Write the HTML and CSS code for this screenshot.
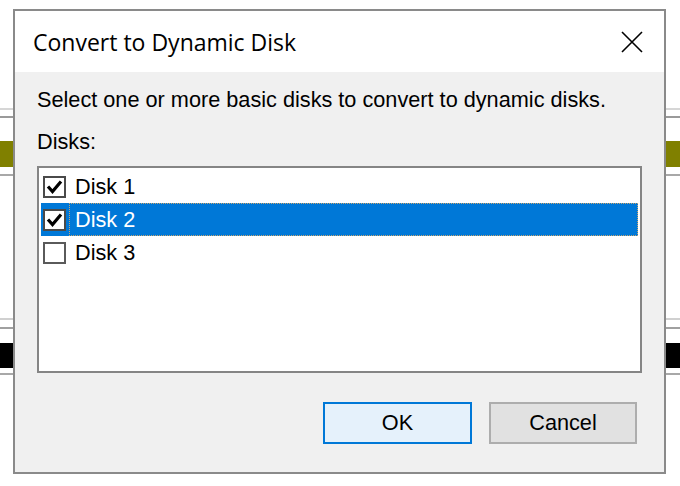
FILE: index.html
```html
<!DOCTYPE html>
<html>
<head>
<meta charset="utf-8">
<link rel="stylesheet" href="styles.css">
</head>
<body>
<div class="desk">
  <div class="stripe s1"></div>
  <div class="stripe s2"></div>
  <div class="stripe s3"></div>
  <div class="stripe s4"></div>
  <div class="stripe s5"></div>
  <div class="stripe s6"></div>
  <div class="stripe s7"></div>
  <div class="stripe s8"></div>
</div>
<div class="dialog">
  <div class="titlebar">
    <span class="title">Convert to Dynamic Disk</span>
    <svg class="close" width="22" height="22" viewBox="0 0 22 22"><path d="M1 1 L21 21 M21 1 L1 21" stroke="#000" stroke-width="1.6" fill="none"/></svg>
  </div>
  <div class="content">
    <div class="line instr">Select one or more basic disks to convert to dynamic disks.</div>
    <div class="line label">Disks:</div>
    <div class="listbox">
      <div class="row">
        <svg class="cb" width="23" height="22" viewBox="0 0 23 22"><rect x="1" y="1" width="21" height="20" fill="#fff" stroke="#4a4a4a" stroke-width="2"/><path d="M5 10.5 L9.5 15.5 L18 5.5" stroke="#000" stroke-width="3.2" fill="none"/></svg>
        <span class="txt">Disk 1</span>
      </div>
      <div class="row sel">
        <svg class="cb" width="23" height="22" viewBox="0 0 23 22"><rect x="1" y="1" width="21" height="20" fill="#fff" stroke="#4a4a4a" stroke-width="2"/><path d="M5 10.5 L9.5 15.5 L18 5.5" stroke="#000" stroke-width="3.2" fill="none"/></svg>
        <span class="txt">Disk 2</span>
      </div>
      <div class="row">
        <svg class="cb" width="23" height="22" viewBox="0 0 23 22"><rect x="1" y="1" width="21" height="20" fill="#fff" stroke="#5a5a5a" stroke-width="2"/></svg>
        <span class="txt">Disk 3</span>
      </div>
    </div>
    <div class="buttons">
      <div class="btn ok">OK</div>
      <div class="btn">Cancel</div>
    </div>
  </div>
</div>
</body>
</html>
```

FILE: styles.css
```css
html, body {
  margin: 0;
  padding: 0;
  width: 680px;
  height: 486px;
  overflow: hidden;
  background: #fff;
}
.desk {
  display: flex;
  flex-direction: column;
}
.stripe { width: 100%; }
.s1 { margin-top: 108px; height: 2px; background: #d6d6d6; }
.s2 { margin-top: 6px; height: 2px; background: #9a9a9a; }
.s3 { margin-top: 23px; height: 26px; background: #808000; }
.s4 { margin-top: 7px; height: 2px; background: #a8a8a8; }
.s5 { margin-top: 142px; height: 2px; background: #d0d0d0; }
.s6 { margin-top: 7px; height: 2px; background: #a0a0a0; }
.s7 { margin-top: 14px; height: 25px; background: #000; }
.s8 { margin-top: 5px; height: 2px; background: #a8a8a8; }

.dialog {
  position: absolute;
  left: 13px;
  top: 9px;
  width: 649px;
  height: 461px;
  border: 2px solid #8a8a8a;
  background: #f0f0f0;
  display: flex;
  flex-direction: column;
  font-family: "Liberation Sans", Arial, sans-serif;
  color: #000;
}
.titlebar {
  height: 61px;
  background: #fff;
  display: flex;
  align-items: center;
  justify-content: space-between;
  padding: 0 21px 0 18px;
}
.title {
  font-family: "Open Sans", "Noto Sans", sans-serif;
  font-size: 23px;
  color: #000;
}
.close { display: block; }
.content {
  padding: 16px 22px 0 22px;
  display: flex;
  flex-direction: column;
  flex: 1;
}
.line {
  font-size: 21.7px;
  line-height: 24px;
  white-space: nowrap;
}
.label { margin-top: 18px; }
.listbox {
  margin-top: 12px;
  width: 597px;
  height: 199px;
  border: 2px solid #858585;
  background: #fff;
  padding: 2px;
  box-sizing: content-box;
  display: flex;
  flex-direction: column;
}
.row {
  height: 33px;
  display: flex;
  align-items: center;
  padding-left: 2px;
}
.cb { display: block; flex: none; }
.txt {
  font-size: 21.7px;
  margin-left: 3px;
  padding-left: 5px;
  height: 31px;
  line-height: 31px;
  flex: 1;
  border: 1px dotted transparent;
}
.sel { background: #0078d7; }
.sel .txt {
  color: #fff;
  border: 1px dotted #c9a56e;
}
.buttons {
  display: flex;
  justify-content: flex-end;
  gap: 17px;
  margin-top: 29px;
  padding-right: 5px;
}
.btn {
  width: 144px;
  height: 38px;
  border: 2px solid #adadad;
  background: #e1e1e1;
  font-size: 21.7px;
  line-height: 38px;
  text-align: center;
}
.ok {
  width: 145px;
  border-color: #0078d7;
  background: #e5f1fb;
}
```
